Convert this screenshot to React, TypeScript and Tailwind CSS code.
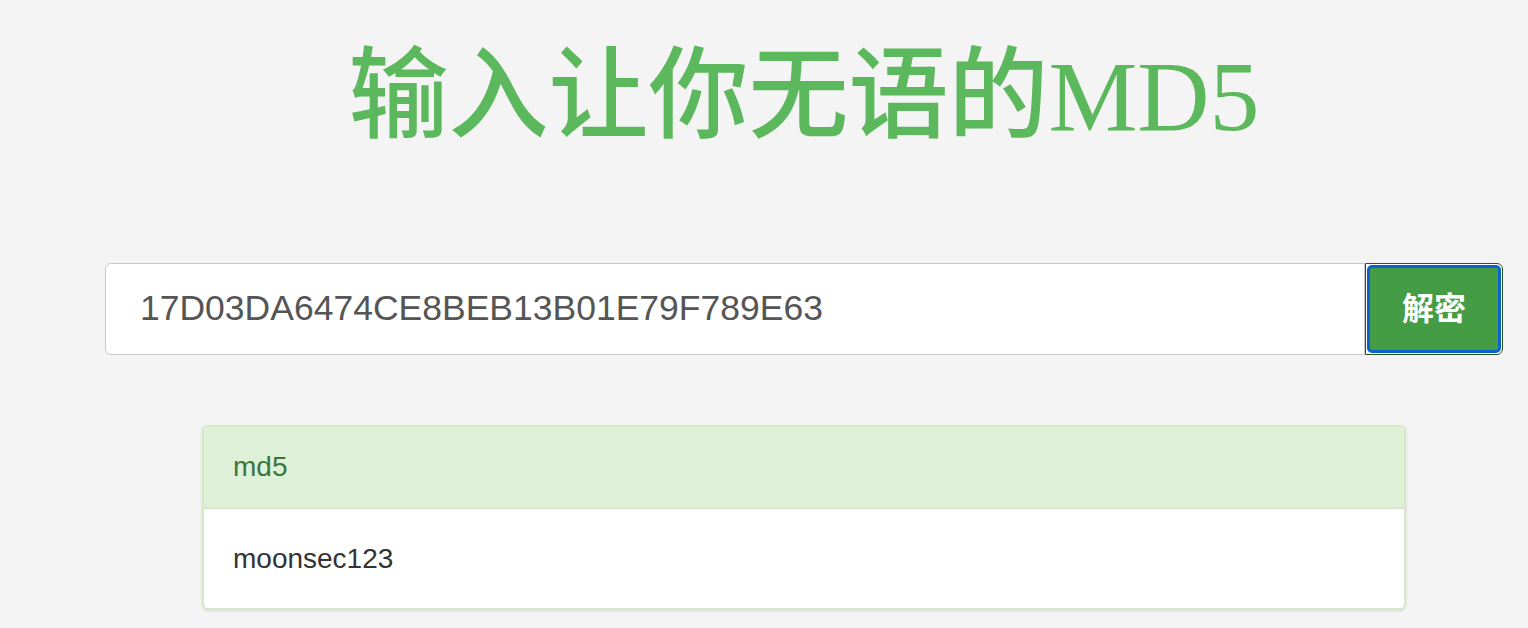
import React from "react";

const App = () => {
  return (
    <div className="min-h-screen bg-[#f4f4f4] pl-[80px]" style={{ fontFamily: '"Liberation Sans", "Noto Sans CJK SC", sans-serif' }}>
      {/* Title */}
      <h1
        className="pt-[40px] text-center text-[100px] leading-[114px] text-[#5cb85c] font-medium"
        style={{ fontFamily: '"Liberation Serif", "Noto Sans CJK SC", serif' }}
      >
        输入让你无语的MD5
      </h1>

      {/* Search */}
      <div className="mx-auto mt-[109px] flex w-[1398px] h-[92px]">
        <input
          defaultValue="17D03DA6474CE8BEB13B01E79F789E63"
          className="flex-1 rounded-l-[6px] border border-[#c8c8c8] bg-white pl-[34px] text-[35.5px] text-[#555555] outline-none"
        />
        <button className="w-[138px] rounded-r-[6px] border border-[#255625] bg-white p-[1px]">
          <div className="flex h-full items-center justify-center rounded-[5px] border-[3px] border-[#0a63d1] bg-[#449d44] text-[32px] font-bold text-white">
            解密
          </div>
        </button>
      </div>

      {/* Result panel */}
      <div className="mx-auto mt-[70px] w-[1204px] overflow-hidden rounded-[6px] border-2 border-[#d6e9c6] bg-white shadow-sm">
        <div className="flex h-[82px] items-center border-b-2 border-[#d6e9c6] bg-[#dff0d8] px-[29px] text-[28px] text-[#3c763d]">
          md5
        </div>
        <div className="flex h-[99px] items-center px-[29px] text-[28px] text-[#333333]">
          moonsec123
        </div>
      </div>
    </div>
  );
};

export default App;
